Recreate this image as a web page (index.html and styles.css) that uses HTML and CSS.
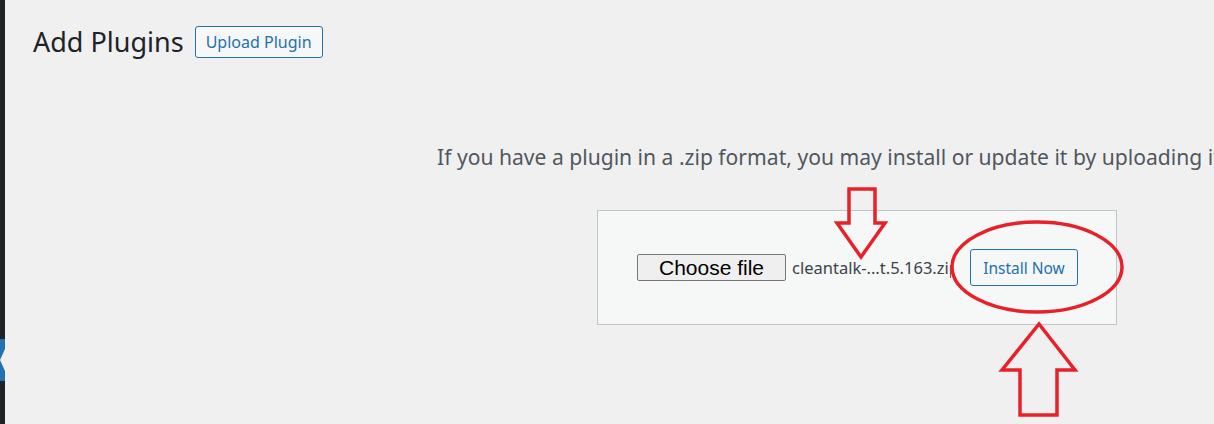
FILE: index.html
```html
<!DOCTYPE html>
<html lang="en">
<head>
<meta charset="utf-8">
<title>Add Plugins</title>
<link rel="stylesheet" href="styles.css">
</head>
<body>
<div class="layout">
  <aside class="adminmenu">
    <div class="menu-top"></div>
    <div class="menu-current"><span class="notch"></span></div>
    <div class="menu-bottom"></div>
  </aside>
  <main class="content">
    <div class="wrap">
      <header class="page-head">
        <h1 class="title">Add Plugins</h1>
        <a class="title-action" href="#">Upload Plugin</a>
      </header>
      <section class="upload-plugin">
        <p class="install-help">If you have a plugin in a .zip format, you may install or update it by uploading it here.</p>
        <form class="upload-form">
          <div class="file-input">
            <span class="file-btn">Choose file</span>
            <span class="file-name">cleantalk-...t.5.163.zip</span>
          </div>
          <button type="button" class="install-btn">Install Now</button>
        </form>
      </section>
    </div>
  </main>
</div>
<svg class="annot" width="1214" height="424" viewBox="0 0 1214 424">
  <g fill="none" stroke="#e8202a" stroke-width="3.5" stroke-linejoin="miter">
    <path d="M849 189 H875 V223 H885 L861 257 L837 223 H849 Z"/>
    <ellipse cx="1037" cy="267" rx="85" ry="45"/>
    <path d="M1039 324 L1075 370 H1057 V415 H1020 V370 H1002 Z"/>
  </g>
</svg>
</body>
</html>
```
FILE: styles.css
```css
html, body {
  margin: 0;
  padding: 0;
}
body {
  width: 1214px;
  height: 424px;
  overflow: hidden;
  background: #f0f0f1;
  font-family: "Noto Sans", "Open Sans", sans-serif;
  position: relative;
}
.layout {
  display: flex;
  height: 424px;
}
.adminmenu {
  width: 5px;
  flex: none;
  display: flex;
  flex-direction: column;
  background: #1d2327;
}
.menu-top {
  height: 339px;
}
.menu-current {
  height: 42px;
  background: #2271b1;
  position: relative;
}
.notch {
  position: absolute;
  left: 0;
  top: 10px;
  width: 0;
  height: 0;
  border-top: 11px solid transparent;
  border-bottom: 11px solid transparent;
  border-right: 5px solid #f0f0f1;
}
.menu-bottom {
  flex: 1;
}
.content {
  flex: none;
  width: 1700px;
  padding-left: 28px;
}
.wrap {
  width: 1648px;
}
.page-head {
  display: flex;
  align-items: center;
  padding-top: 26px;
  height: 32px;
}
.title {
  margin: 0;
  font-size: 27px;
  font-weight: 400;
  color: #1d2327;
  line-height: 32px;
}
.title-action {
  margin-left: 11px;
  height: 30px;
  padding: 0 10px;
  border: 1px solid #2271b1;
  border-radius: 3px;
  color: #2271b1;
  background: #f6f7f7;
  text-decoration: none;
  font-size: 16px;
  line-height: 30px;
}
.upload-plugin {
  display: flex;
  flex-direction: column;
  align-items: center;
}
.install-help {
  margin: 0;
  padding: 84px 0 38px;
  font-size: 21.1px;
  color: #50575e;
  white-space: nowrap;
  line-height: 30px;
}
.upload-form {
  width: 520px;
  height: 115px;
  border: 1px solid #c3c4c7;
  background: #f6f7f7;
  display: flex;
  align-items: center;
  justify-content: flex-start;
  gap: 19px;
  box-sizing: border-box;
}
.file-input {
  display: flex;
  align-items: center;
  gap: 6px;
  width: 314px;
  margin-left: 39px;
  overflow: hidden;
  white-space: nowrap;
}
.file-btn {
  flex: none;
  width: 147px;
  height: 25px;
  border: 1px solid #767676;
  border-radius: 2px;
  background: #efefef;
  color: #000;
  font-family: "Liberation Sans", Arial, sans-serif;
  font-size: 21px;
  line-height: 25px;
  text-align: center;
}
.file-name {
  color: #3c434a;
  font-size: 16.5px;
}
.install-btn {
  flex: none;
  width: 108px;
  height: 37px;
  border: 1px solid #2271b1;
  border-radius: 3px;
  background: #f6f7f7;
  color: #2271b1;
  font-family: "Noto Sans", "Open Sans", sans-serif;
  font-size: 15.5px;
  padding: 0;
}
.annot {
  position: absolute;
  left: 0;
  top: 0;
  pointer-events: none;
}
```
